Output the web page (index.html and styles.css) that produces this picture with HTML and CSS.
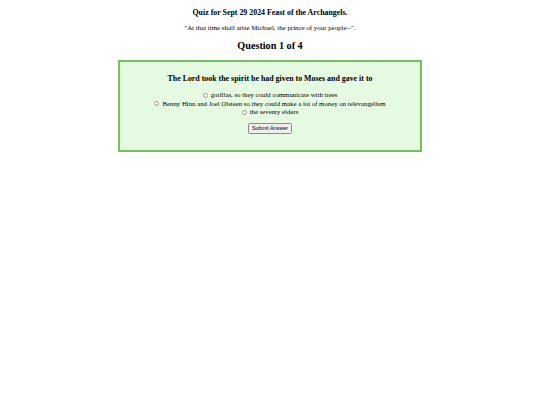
FILE: index.html
```html
<!DOCTYPE html>
<html>
<head>
<meta charset="utf-8">
<link rel="stylesheet" href="styles.css">
</head>
<body>
<div class="page">
  <h1 class="title">Quiz for Sept 29 2024 Feast of the Archangels.</h1>
  <p class="quote">"At that time shall arise Michael, the prince of your people--".</p>
  <h2 class="qnum">Question 1 of 4</h2>
  <form class="card">
    <h3 class="qtext">The Lord took the spirit he had given to Moses and gave it to</h3>
    <div class="options">
      <label class="opt"><input type="radio" name="a" class="radio"> gorillas, so they could communicate with trees</label>
      <label class="opt"><input type="radio" name="a" class="radio"> Benny Hinn and Joel Olsteen so they could make a lot of money on televangelism</label>
      <label class="opt"><input type="radio" name="a" class="radio"> the seventy elders</label>
    </div>
    <button type="button" class="submit">Submit Answer</button>
  </form>
</div>
</body>
</html>
```
FILE: styles.css
```css
html, body {
  margin: 0;
  padding: 0;
  background: #fff;
}
.page {
  font-family: "Liberation Serif", "Times New Roman", serif;
  color: #000;
  display: flex;
  flex-direction: column;
  align-items: center;
  padding-top: 8px;
}
.title {
  margin: 0;
  font-size: 7.9px;
  line-height: 10px;
  font-weight: bold;
}
.quote {
  margin: 5px 0 0;
  font-size: 6.9px;
  line-height: 10px;
}
.qnum {
  margin: 6px 0 0;
  font-size: 10.2px;
  line-height: 14px;
  font-weight: bold;
}
.card {
  margin-top: 7px;
  width: 300px;
  height: 88px;
  box-sizing: content-box;
  border: 2px solid #74c15e;
  background: #e5fbe2;
  display: flex;
  flex-direction: column;
  align-items: center;
}
.qtext {
  margin: 12px 0 0;
  font-size: 7.9px;
  line-height: 10px;
  font-weight: bold;
}
.options {
  margin-top: 7px;
  display: flex;
  flex-direction: column;
  align-items: center;
}
.opt {
  font-size: 6.8px;
  line-height: 8.5px;
  display: flex;
  align-items: center;
  gap: 3px;
}
.radio {
  appearance: none;
  -webkit-appearance: none;
  margin: 0;
  width: 5px;
  height: 5px;
  border: 0.6px solid #9a9a9a;
  border-radius: 50%;
  background: #fff;
}
.submit {
  margin-top: 6px;
  font-family: "Liberation Sans", Arial, sans-serif;
  font-size: 5.4px;
  line-height: 7px;
  padding: 1px 3px;
  border: 0.6px solid #8a8a8a;
  border-radius: 1.5px;
  background: #efefef;
  color: #000;
}
```
